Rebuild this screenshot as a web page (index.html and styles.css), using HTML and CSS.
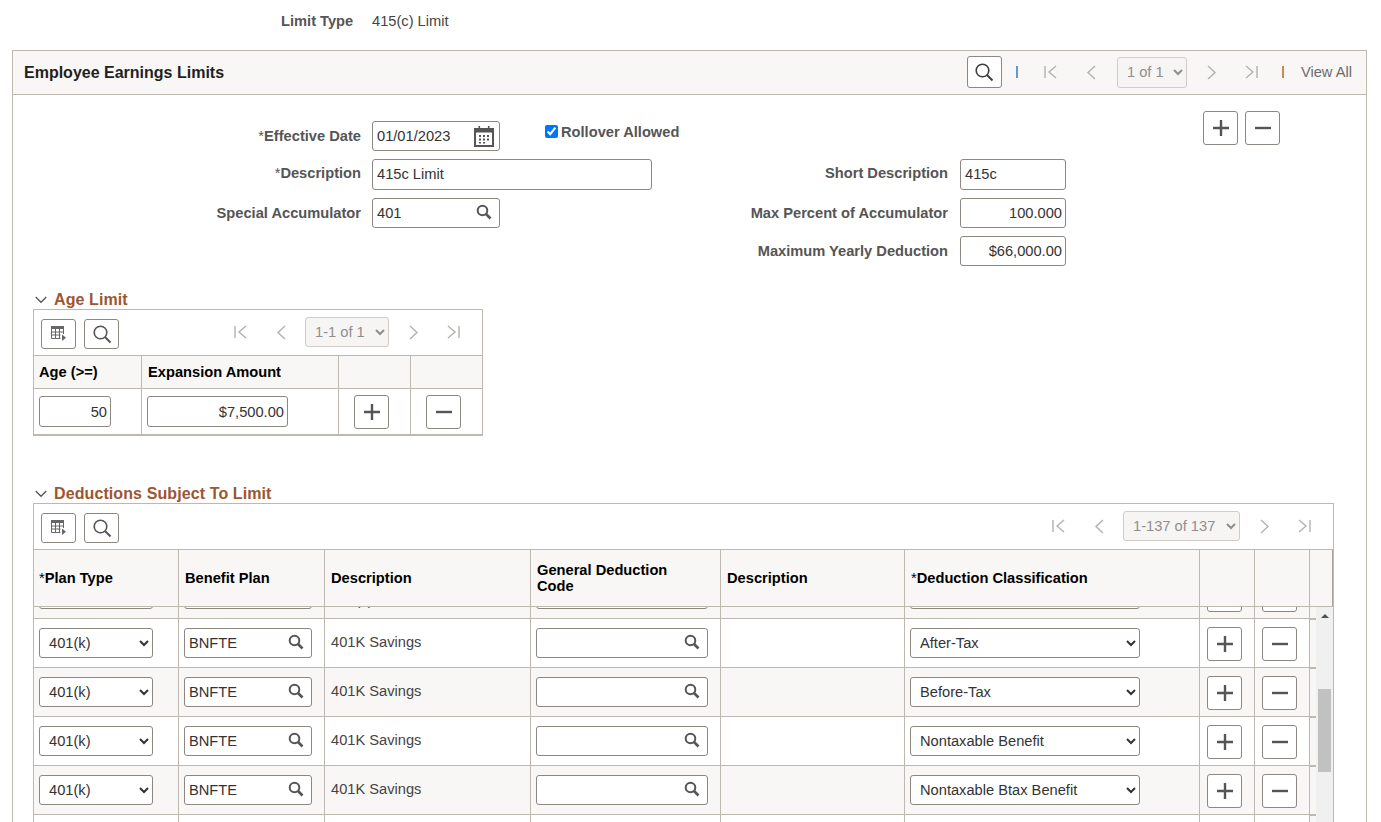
FILE: index.html
```html
<!DOCTYPE html>
<html lang="en">
<head>
<meta charset="utf-8">
<title>Employee Earnings Limits</title>
<link rel="stylesheet" href="styles.css">
</head>
<body>
<svg class="defs" aria-hidden="true">
  <symbol id="i-search" viewBox="0 0 20 20"><circle cx="8.5" cy="8.5" r="6.3" fill="none" stroke="currentColor" stroke-width="1.6"/><path d="M13 13l5.5 5.5" stroke="currentColor" stroke-width="2" fill="none"/></symbol>
  <symbol id="i-prompt" viewBox="0 0 16 16"><circle cx="6.5" cy="6.5" r="4.8" fill="none" stroke="currentColor" stroke-width="2"/><path d="M10 10l4.5 4.5" stroke="currentColor" stroke-width="2.6" fill="none"/></symbol>
  <symbol id="i-grid" viewBox="0 0 16 16"><path d="M0 0h13v3H0z" fill="currentColor"/><path d="M.5 3v9.500h9M12.500 3v5M.5 6h12M.5 9h9M4.500 3v9M8.500 3v9" fill="none" stroke="currentColor"/><path d="M11 8.500l4 3.300-4 3.300z" fill="currentColor"/></symbol>
  <symbol id="i-cal" viewBox="0 0 22 22"><path d="M2 4h18v17H2z" fill="none" stroke="currentColor" stroke-width="2"/><path d="M2 4h18v3.500H2zM5.500 1h1.600v4H5.500zM14.900 1h1.600v4h-1.600z" fill="currentColor"/><path d="M6 10h2v2H6zM10 10h2v2h-2zM14 10h2v2h-2zM6 13.500h2v2H6zM10 13.500h2v2h-2zM14 13.500h2v2h-2zM6 17h2v1.600H6zM10 17h2v1.600h-2z" fill="currentColor"/></symbol>
  <symbol id="i-first" viewBox="0 0 16 16"><path d="M3 2v12M14 2L7 8l7 6" fill="none" stroke="currentColor" stroke-width="1.400"/></symbol>
  <symbol id="i-prev" viewBox="0 0 16 16"><path d="M12 2L5 8.500l7 6.500" fill="none" stroke="currentColor" stroke-width="1.400"/></symbol>
  <symbol id="i-next" viewBox="0 0 16 16"><path d="M5 2l7 6.500L5 15" fill="none" stroke="currentColor" stroke-width="1.400"/></symbol>
  <symbol id="i-last" viewBox="0 0 16 16"><path d="M13 2v12M2 2l7 6-7 6" fill="none" stroke="currentColor" stroke-width="1.400"/></symbol>
  <symbol id="i-plus" viewBox="0 0 16 16"><path d="M8 0v16M0 8h16" fill="none" stroke="currentColor" stroke-width="2.400"/></symbol>
  <symbol id="i-minus" viewBox="0 0 16 16"><path d="M0 8h16" fill="none" stroke="currentColor" stroke-width="2.400"/></symbol>
  <symbol id="i-chev" viewBox="0 0 12 8"><path d="M.7 1l5.300 5.300L11.300 1" fill="none" stroke="currentColor" stroke-width="1.300"/></symbol>
</svg>

<div class="limit-type">
  <span class="limit-label">Limit Type</span>
  <span class="limit-value">415(c) Limit</span>
</div>

<section class="panel">
  <header class="panel-head">
    <h1 class="panel-title">Employee Earnings Limits</h1>
    <div class="panel-tools">
      <button class="btn btn-head" type="button" aria-label="Find"><svg class="ic-search ic-dark"><use href="#i-search"/></svg></button>
      <span class="sep sep-blue"></span>
      <div class="pager pager-head">
        <svg class="ic-nav"><use href="#i-first"/></svg>
        <svg class="ic-nav"><use href="#i-prev"/></svg>
        <select class="page-select page-1of1" disabled><option>1 of 1</option></select>
        <svg class="ic-nav"><use href="#i-next"/></svg>
        <svg class="ic-nav"><use href="#i-last"/></svg>
      </div>
      <span class="sep sep-orange"></span>
      <span class="view-all">View All</span>
    </div>
  </header>

  <div class="panel-body">
    <div class="form-wrap">
      <div class="form-grid">
        <label class="lbl"><span class="req">*</span>Effective Date</label>
        <div class="box">
          <input class="box-input" type="text" value="01/01/2023">
          <svg class="ic-cal"><use href="#i-cal"/></svg>
        </div>
        <label class="rollover"><input class="check" type="checkbox" checked>Rollover Allowed</label>
        <span></span><span></span>

        <label class="lbl lbl-up"><span class="req">*</span>Description</label>
        <input class="field field-up span-2" type="text" value="415c Limit">
        <label class="lbl lbl-right lbl-up">Short Description</label>
        <input class="field field-up" type="text" value="415c">

        <label class="lbl">Special Accumulator</label>
        <div class="box">
          <input class="box-input" type="text" value="401">
          <svg class="ic-prompt"><use href="#i-prompt"/></svg>
        </div>
        <span></span>
        <label class="lbl lbl-right">Max Percent of Accumulator</label>
        <input class="field num" type="text" value="100.000">

        <span></span><span></span><span></span>
        <label class="lbl lbl-right">Maximum Yearly Deduction</label>
        <input class="field num" type="text" value="$66,000.00">
      </div>
      <div class="form-actions">
        <button class="btn btn-action" type="button" aria-label="Add"><svg class="ic-pm"><use href="#i-plus"/></svg></button>
        <button class="btn btn-action" type="button" aria-label="Delete"><svg class="ic-pm"><use href="#i-minus"/></svg></button>
      </div>
    </div>

    <h2 class="sec-title sec-age"><svg class="ic-chev"><use href="#i-chev"/></svg>Age Limit</h2>
    <div class="gridbox age-box">
      <div class="toolbar">
        <button class="btn btn-tool" type="button" aria-label="Personalize"><svg class="ic-grid"><use href="#i-grid"/></svg></button>
        <button class="btn btn-tool" type="button" aria-label="Find"><svg class="ic-search"><use href="#i-search"/></svg></button>
        <div class="pager">
          <svg class="ic-nav"><use href="#i-first"/></svg>
          <svg class="ic-nav"><use href="#i-prev"/></svg>
          <select class="page-select page-age" disabled><option>1-1 of 1</option></select>
          <svg class="ic-nav"><use href="#i-next"/></svg>
          <svg class="ic-nav"><use href="#i-last"/></svg>
        </div>
      </div>
      <div class="age-row age-head">
        <div class="cell th">Age (&gt;=)</div>
        <div class="cell th">Expansion Amount</div>
        <div class="cell th"></div>
        <div class="cell th"></div>
      </div>
      <div class="age-row age-data">
        <div class="cell"><input class="field num w72" type="text" value="50"></div>
        <div class="cell"><input class="field num w141" type="text" value="$7,500.00"></div>
        <div class="cell cell-btn"><button class="btn btn-row" type="button" aria-label="Add"><svg class="ic-pm"><use href="#i-plus"/></svg></button></div>
        <div class="cell cell-btn"><button class="btn btn-row" type="button" aria-label="Delete"><svg class="ic-pm"><use href="#i-minus"/></svg></button></div>
      </div>
    </div>

    <h2 class="sec-title sec-ded"><svg class="ic-chev"><use href="#i-chev"/></svg>Deductions Subject To Limit</h2>
    <div class="gridbox ded-box">
      <div class="toolbar">
        <button class="btn btn-tool" type="button" aria-label="Personalize"><svg class="ic-grid"><use href="#i-grid"/></svg></button>
        <button class="btn btn-tool" type="button" aria-label="Find"><svg class="ic-search"><use href="#i-search"/></svg></button>
        <div class="pager">
          <svg class="ic-nav"><use href="#i-first"/></svg>
          <svg class="ic-nav"><use href="#i-prev"/></svg>
          <select class="page-select page-ded" disabled><option>1-137 of 137</option></select>
          <svg class="ic-nav"><use href="#i-next"/></svg>
          <svg class="ic-nav"><use href="#i-last"/></svg>
        </div>
      </div>
      <div class="ded-cols ded-head">
        <div class="cell th"><span class="req">*</span>Plan Type</div>
        <div class="cell th">Benefit Plan</div>
        <div class="cell th">Description</div>
        <div class="cell th th-gen">General Deduction Code</div>
        <div class="cell th">Description</div>
        <div class="cell th"><span class="req">*</span>Deduction Classification</div>
        <div class="cell th"></div>
        <div class="cell th"></div>
        <div class="cell th th-end"></div>
      </div>
      <div class="ded-body">
        <div class="ded-rows">
          <div class="ded-cols ded-row row-alt row-clip">
            <div class="cell"><select class="field sel w114"><option>401(k)</option></select></div>
            <div class="cell"><div class="box w128"><input class="box-input" type="text" value="BNFTE"><svg class="ic-prompt"><use href="#i-prompt"/></svg></div></div>
            <div class="cell cell-text peek">401(k)</div>
            <div class="cell"><div class="box w172"><input class="box-input" type="text"><svg class="ic-prompt"><use href="#i-prompt"/></svg></div></div>
            <div class="cell cell-text"></div>
            <div class="cell"><select class="field sel w230"><option>Before-Tax</option></select></div>
            <div class="cell cell-btn2"><button class="btn btn-row" type="button" aria-label="Add"><svg class="ic-pm"><use href="#i-plus"/></svg></button></div>
            <div class="cell cell-btn2"><button class="btn btn-row" type="button" aria-label="Delete"><svg class="ic-pm"><use href="#i-minus"/></svg></button></div>
            <div class="cell cell-end"></div>
          </div>
          <div class="ded-cols ded-row">
            <div class="cell"><select class="field sel w114"><option>401(k)</option></select></div>
            <div class="cell"><div class="box w128"><input class="box-input" type="text" value="BNFTE"><svg class="ic-prompt"><use href="#i-prompt"/></svg></div></div>
            <div class="cell cell-text">401K Savings</div>
            <div class="cell"><div class="box w172"><input class="box-input" type="text"><svg class="ic-prompt"><use href="#i-prompt"/></svg></div></div>
            <div class="cell cell-text"></div>
            <div class="cell"><select class="field sel w230"><option>After-Tax</option></select></div>
            <div class="cell cell-btn2"><button class="btn btn-row" type="button" aria-label="Add"><svg class="ic-pm"><use href="#i-plus"/></svg></button></div>
            <div class="cell cell-btn2"><button class="btn btn-row" type="button" aria-label="Delete"><svg class="ic-pm"><use href="#i-minus"/></svg></button></div>
            <div class="cell cell-end"></div>
          </div>
          <div class="ded-cols ded-row row-alt">
            <div class="cell"><select class="field sel w114"><option>401(k)</option></select></div>
            <div class="cell"><div class="box w128"><input class="box-input" type="text" value="BNFTE"><svg class="ic-prompt"><use href="#i-prompt"/></svg></div></div>
            <div class="cell cell-text">401K Savings</div>
            <div class="cell"><div class="box w172"><input class="box-input" type="text"><svg class="ic-prompt"><use href="#i-prompt"/></svg></div></div>
            <div class="cell cell-text"></div>
            <div class="cell"><select class="field sel w230"><option>Before-Tax</option></select></div>
            <div class="cell cell-btn2"><button class="btn btn-row" type="button" aria-label="Add"><svg class="ic-pm"><use href="#i-plus"/></svg></button></div>
            <div class="cell cell-btn2"><button class="btn btn-row" type="button" aria-label="Delete"><svg class="ic-pm"><use href="#i-minus"/></svg></button></div>
            <div class="cell cell-end"></div>
          </div>
          <div class="ded-cols ded-row">
            <div class="cell"><select class="field sel w114"><option>401(k)</option></select></div>
            <div class="cell"><div class="box w128"><input class="box-input" type="text" value="BNFTE"><svg class="ic-prompt"><use href="#i-prompt"/></svg></div></div>
            <div class="cell cell-text">401K Savings</div>
            <div class="cell"><div class="box w172"><input class="box-input" type="text"><svg class="ic-prompt"><use href="#i-prompt"/></svg></div></div>
            <div class="cell cell-text"></div>
            <div class="cell"><select class="field sel w230"><option>Nontaxable Benefit</option></select></div>
            <div class="cell cell-btn2"><button class="btn btn-row" type="button" aria-label="Add"><svg class="ic-pm"><use href="#i-plus"/></svg></button></div>
            <div class="cell cell-btn2"><button class="btn btn-row" type="button" aria-label="Delete"><svg class="ic-pm"><use href="#i-minus"/></svg></button></div>
            <div class="cell cell-end"></div>
          </div>
          <div class="ded-cols ded-row row-alt">
            <div class="cell"><select class="field sel w114"><option>401(k)</option></select></div>
            <div class="cell"><div class="box w128"><input class="box-input" type="text" value="BNFTE"><svg class="ic-prompt"><use href="#i-prompt"/></svg></div></div>
            <div class="cell cell-text">401K Savings</div>
            <div class="cell"><div class="box w172"><input class="box-input" type="text"><svg class="ic-prompt"><use href="#i-prompt"/></svg></div></div>
            <div class="cell cell-text"></div>
            <div class="cell"><select class="field sel w230"><option>Nontaxable Btax Benefit</option></select></div>
            <div class="cell cell-btn2"><button class="btn btn-row" type="button" aria-label="Add"><svg class="ic-pm"><use href="#i-plus"/></svg></button></div>
            <div class="cell cell-btn2"><button class="btn btn-row" type="button" aria-label="Delete"><svg class="ic-pm"><use href="#i-minus"/></svg></button></div>
            <div class="cell cell-end"></div>
          </div>
          <div class="ded-cols ded-row">
            <div class="cell"></div><div class="cell"></div><div class="cell"></div><div class="cell"></div><div class="cell"></div><div class="cell"></div><div class="cell"></div><div class="cell"></div><div class="cell cell-end"></div>
          </div>
        </div>
        <div class="scrollbar">
          <span class="scroll-arrow"></span>
          <span class="scroll-thumb"></span>
        </div>
      </div>
    </div>
  </div>
</section>
</body>
</html>
```

FILE: styles.css
```css
* { box-sizing: border-box; }
html, body { margin: 0; padding: 0; height: 822px; overflow: hidden; background: #fff; }
body { font: 14.667px/16px "Liberation Sans", Arial, sans-serif; color: #333; }
.defs { width: 0; height: 0; display: block; }
.req { font-weight: 400; }

.limit-type { height: 50px; display: flex; padding: 13px 0 0 281px; }
.limit-label { font-weight: 700; color: #555; width: 91px; }
.limit-value { color: #444; }

.panel { margin: 0 14px 0 12px; border: 1px solid #bdb8b0; height: 900px; }
.panel-head { height: 44px; background: #f8f7f5; border-bottom: 1px solid #bdb8b0; display: flex; align-items: center; padding-left: 11px; }
.panel-title { margin: 0; font-size: 16px; line-height: 20px; font-weight: 700; color: #1f1f1f; }
.panel-tools { margin-left: auto; display: flex; align-items: center; padding: 0 14px 1px 0; }
.btn { background: #fff; border: 1px solid #8c8780; border-radius: 3px; padding: 0; display: flex; align-items: center; justify-content: center; color: #555; }
.btn-head { width: 35px; height: 32px; }
.sep { width: 2px; height: 12px; }
.sep-blue { background: #5b9bd5; margin-left: 14px; }
.sep-orange { background: #c98a4b; margin-left: 22px; }
.view-all { margin-left: 17px; color: #6b6b6b; white-space: nowrap; }

.pager { margin-left: auto; display: flex; align-items: center; gap: 16px; color: #b4b1ac; padding-right: 20px; }
.pager .ic-nav:first-child { margin-right: 9px; }
.pager .ic-nav:last-child { margin-left: 9px; }
.pager-head { margin-left: 24px; padding-right: 0; }
.pager-head .page-select { margin-left: 2px; }
.ic-nav { width: 16px; height: 16px; display: block; flex: none; }
.page-select { height: 30px; border: 1px solid #d0cdc8; border-radius: 3px; background-color: #f6f5f3; color: #8f8f8f; font: 14.667px "Liberation Sans", Arial, sans-serif; opacity: 1; padding: 0 0 0 5px; }
.page-1of1 { width: 70px; height: 31px; }
.page-age { width: 84px; }
.page-ded { width: 117px; }

.ic-search { width: 20px; height: 20px; display: block; color: #555; }
.ic-dark { color: #3d3d3d; }
.ic-prompt { width: 16px; height: 16px; flex: none; margin: 0 7px 2px 0; color: #555; }
.ic-cal { width: 22px; height: 22px; flex: none; margin-right: 4px; color: #555; }
.ic-grid { width: 16px; height: 16px; display: block; color: #666; }
.ic-pm { width: 16px; height: 16px; display: block; color: #555; }
.ic-chev { width: 12px; height: 8px; display: block; flex: none; margin-right: 7px; color: #555; }

.panel-body { padding: 16px 0 0 20px; }
.form-wrap { display: flex; margin-left: -20px; }
.form-grid { margin-top: 10px; display: grid; grid-template-columns: 359px 128px 152px 308px 106px; grid-template-rows: 30px 31px 30px 30px; row-gap: 8px; align-items: center; }
.lbl { font-weight: 700; color: #555; text-align: right; padding: 0 11px 1px 0; white-space: nowrap; }
.lbl-right { padding-right: 12px; }
.lbl-up { padding-bottom: 3px; }
.rollover { font-weight: 700; color: #555; display: flex; align-items: center; margin: -9px 0 0 45px; white-space: nowrap; }
.check { width: 13px; height: 13px; margin: 0 3px 0 0; accent-color: #0075ff; }

.field, .box-input { font: 14.667px/16px "Liberation Sans", Arial, sans-serif; color: #333; }
.field { height: 100%; width: 100%; border: 1px solid #8c8780; border-radius: 3px; background: #fff; padding: 0 3px 0 4px; display: block; }
.field-up { padding-bottom: 1px; }
.num { text-align: right; }
.span-2 { grid-column: span 2; }
.box { height: 30px; border: 1px solid #8c8780; border-radius: 3px; background: #fff; display: flex; align-items: center; }
.box-input { border: 0; outline: 0; background: transparent; padding: 0 0 0 4px; flex: 1; min-width: 0; height: 100%; }

.form-actions { display: flex; gap: 7px; margin-left: 137px; align-items: flex-start; }
.btn-action { width: 35px; height: 34px; }

.sec-title { margin: 0; height: 20px; display: flex; align-items: center; font-size: 16px; font-weight: 700; color: #9c5630; padding: 2px 0 0 2px; line-height: 20px; letter-spacing: .1px; }
.sec-age { margin-top: 23px; }
.sec-ded { margin-top: 47px; }

.gridbox { border: 1px solid #bdb8b0; }
.age-box { width: 450px; border-bottom-width: 2px; }
.ded-box { width: 1301px; }
.toolbar { height: 45px; padding: 9px 0 0 7px; display: flex; align-items: flex-start; gap: 8px; }
.toolbar .pager { margin-top: -2px; }
.btn-tool { width: 35px; height: 30px; }
.btn-row { width: 35px; height: 34px; }

.cell { border-right: 1px solid #bdb8b0; padding-left: 5px; display: flex; align-items: center; }
.cell:last-child { border-right: 0; }
.th { background: #f8f7f5; font-weight: 700; color: #000; padding: 0 0 0 6px; }
.th:first-child { padding-left: 5px; }
.cell-text { padding-left: 6px; color: #444; padding-bottom: 2px; }
.th-gen { padding-right: 30px; }

.age-row { display: grid; grid-template-columns: 108px 197px 72px 71px; border-top: 1px solid #bdb8b0; }
.age-head { height: 33px; }
.age-data { height: 46px; }
.age-data .field { height: 31px; }
.w72 { width: 72px; }
.w141 { width: 141px; }
.cell-btn { padding-left: 15px; }
.cell-btn2 { padding: 2px 0 0 7px; }

.ded-cols { display: grid; grid-template-columns: 145px 146px 206px 190px 184px 295px 55px 55px 23px; }
.ded-head { height: 58px; border-top: 1px solid #bdb8b0; border-bottom: 1px solid #bdb8b0; }
.ded-head .th:last-child { border-right: 1px solid #a8a39b; }
.ded-body { display: flex; }
.ded-rows { width: 1282px; overflow: hidden; }
.ded-rows .ded-cols { grid-template-columns: 145px 146px 206px 190px 184px 295px 55px 55px 6px; }
.ded-row { height: 49px; border-top: 1px solid #bdb8b0; }
.row-alt .cell { background: #f8f7f5; }
.row-clip { height: 11px; overflow: hidden; border-top: 0; grid-template-rows: 48px; align-content: end; }
.peek { padding-top: 14px; }
.cell-end { background: #f8f7f5; border-top: 1px solid #bdb8b0; }
.sel { height: 30px; padding: 0 5px; }
.w114 { width: 114px; }
.w128 { width: 128px; }
.w172 { width: 172px; }
.w230 { width: 230px; }

.scrollbar { width: 17px; background: #f0f0f0; height: 260px; display: flex; flex-direction: column; align-items: center; }
.scroll-arrow { margin-top: 7px; width: 0; height: 0; border-left: 4px solid transparent; border-right: 4px solid transparent; border-bottom: 4px solid #505050; }
.scroll-thumb { margin-top: 71px; width: 13px; height: 83px; background: #c1c1c1; }
```
